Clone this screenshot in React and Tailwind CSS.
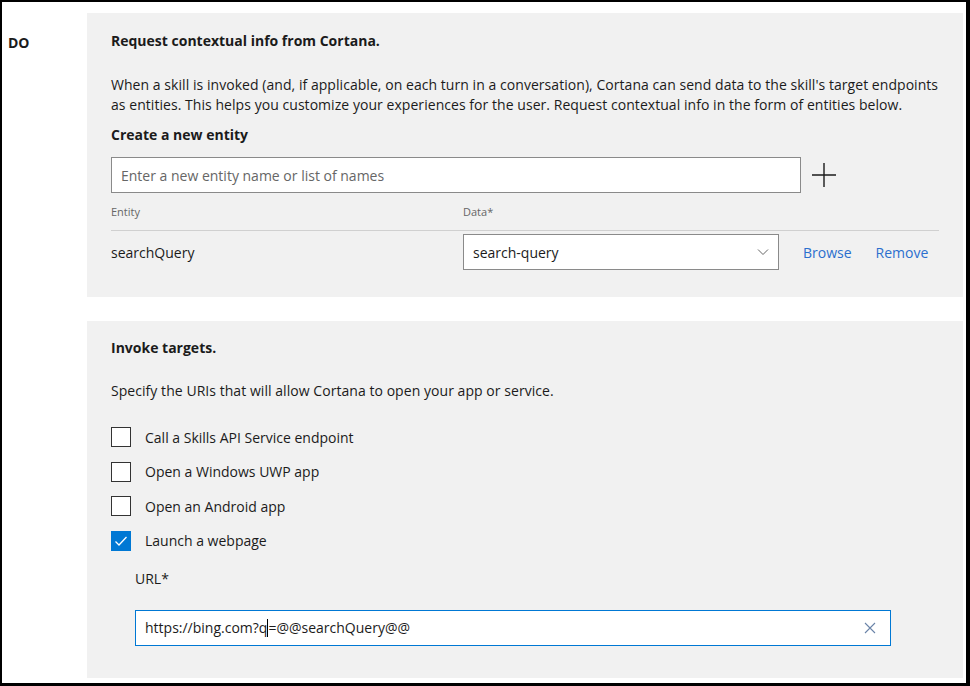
import React from "react";

const font = { fontFamily: '"Open Sans", "Noto Sans", sans-serif' };

const Checkbox = ({ checked, label }) => (
  <label className="flex items-center h-[20px] gap-[14px]">
    {checked ? (
      <span className="w-[20px] h-[20px] bg-[#0078d4] flex items-center justify-center">
        <svg width="14" height="14" viewBox="0 0 14 14" fill="none">
          <path d="M1.5 7.5 L5 11 L12.5 3" stroke="white" strokeWidth="1.3" />
        </svg>
      </span>
    ) : (
      <span className="w-[20px] h-[20px] border border-[#333] bg-white" />
    )}
    <span className="text-[14px] text-[#1b1b1b]">{label}</span>
  </label>
);

export default function App() {
  return (
    <div
      className="w-[970px] h-[686px] bg-black pt-[2px] pl-[2px] pr-[4px] pb-[3px] overflow-hidden"
      style={font}
    >
      <div className="w-full h-full bg-white flex text-[#1b1b1b]">
        <div className="w-[85px] shrink-0 pl-[6px] pt-[30px] text-[14px] font-bold">DO</div>
        <div className="w-[876px] pt-[11px] flex flex-col gap-[24px]">
          {/* contextual info */}
          <section className="bg-[#f1f1f1] h-[284px] px-[24px] pt-[18px]">
            <h2 className="text-[14px] font-bold leading-[20px]">Request contextual info from Cortana.</h2>
            <p className="mt-[24px] text-[14px] leading-[20px] whitespace-nowrap tracking-[0.05px]">
              When a skill is invoked (and, if applicable, on each turn in a conversation), Cortana can send data to the skill's target endpoints
              <br />
              as entities. This helps you customize your experiences for the user. Request contextual info in the form of entities below.
            </p>
            <h3 className="mt-[10px] text-[14px] font-bold leading-[20px]">Create a new entity</h3>
            <div className="mt-[12px] flex items-center">
              <div className="w-[690px] h-[36px] bg-white border border-[#8a8a8a] flex items-center px-[9px] text-[14px] text-[#666]">
                Enter a new entity name or list of names
              </div>
              <svg className="ml-[11px]" width="24" height="24" viewBox="0 0 24 24">
                <path d="M12 0 V24 M0 12 H24" stroke="#1b1b1b" strokeWidth="1.4" />
              </svg>
            </div>
            <div className="mt-[11px] flex text-[11px] text-[#666] leading-[16px]">
              <span className="w-[352px]">Entity</span>
              <span>Data*</span>
            </div>
            <div className="mt-[10px] border-t border-[#d0d0d0] w-[828px] pt-[3px] flex items-center">
              <span className="w-[352px] text-[14px]">searchQuery</span>
              <div className="w-[316px] h-[36px] bg-white border border-[#8a8a8a] flex items-center justify-between px-[9px] text-[14px]">
                <span>search-query</span>
                <svg width="12" height="8" viewBox="0 0 12 8" fill="none">
                  <path d="M1 1.5 L6 6.5 L11 1.5" stroke="#666" strokeWidth="1" />
                </svg>
              </div>
              <span className="ml-[24px] text-[14px] text-[#2b6fce]">Browse</span>
              <span className="ml-[24px] text-[14px] text-[#2b6fce]">Remove</span>
            </div>
          </section>

          {/* invoke targets */}
          <section className="bg-[#f1f1f1] h-[357px] px-[24px] pt-[17px]">
            <h2 className="text-[14px] font-bold leading-[20px]">Invoke targets.</h2>
            <p className="mt-[23px] text-[14px] leading-[20px] tracking-[0.05px]">
              Specify the URIs that will allow Cortana to open your app or service.
            </p>
            <div className="mt-[26px] flex flex-col gap-[14.5px]">
              <Checkbox label="Call a Skills API Service endpoint" />
              <Checkbox label="Open a Windows UWP app" />
              <Checkbox label="Open an Android app" />
              <Checkbox checked label="Launch a webpage" />
            </div>
            <div className="pl-[24px]">
              <div className="mt-[18px] text-[14px] leading-[20px]">URL*</div>
              <div className="mt-[21px] w-[756px] h-[36px] bg-white border border-[#0078d4] flex items-center justify-between pl-[9px] pr-[14px] text-[14px]">
                <span className="flex items-center">
                  https://bing.com?q
                  <span className="inline-block w-[1px] h-[18px] bg-black" />
                  =@@searchQuery@@
                </span>
                <svg width="12" height="12" viewBox="0 0 12 12">
                  <path d="M1 1 L11 11 M11 1 L1 11" stroke="#6a84a8" strokeWidth="1.1" />
                </svg>
              </div>
            </div>
          </section>
        </div>
      </div>
    </div>
  );
}
